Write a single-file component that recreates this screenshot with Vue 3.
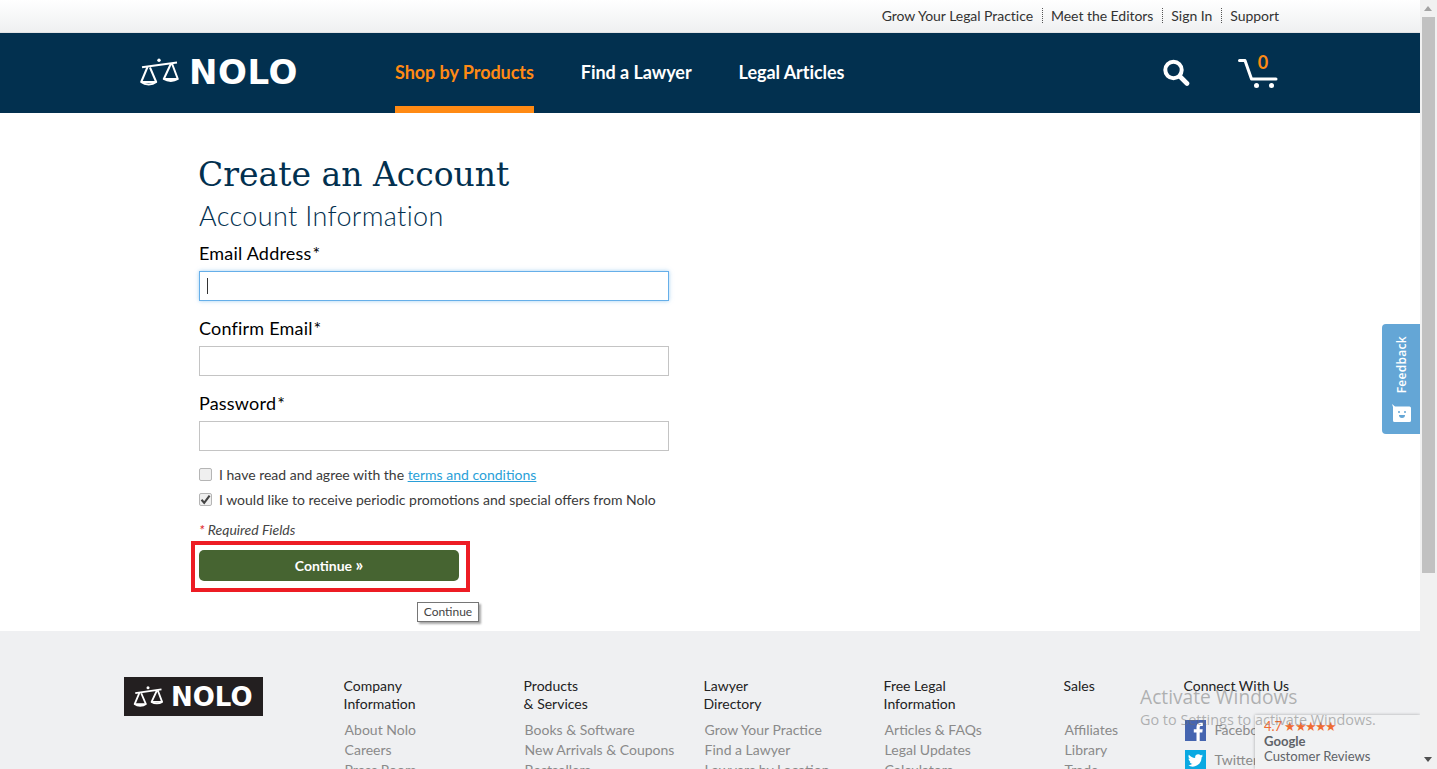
<script setup>
const topLinks = ['Grow Your Legal Practice', 'Meet the Editors', 'Sign In', 'Support']
const navLinks = [
  { label: 'Shop by Products', active: true },
  { label: 'Find a Lawyer', active: false },
  { label: 'Legal Articles', active: false }
]
const fields = [
  { label: 'Email Address', focus: true },
  { label: 'Confirm Email', focus: false },
  { label: 'Password', focus: false }
]
const columns = [
  { title: ['Company', 'Information'], links: ['About Nolo', 'Careers', 'Press Room'] },
  { title: ['Products', '& Services'], links: ['Books & Software', 'New Arrivals & Coupons', 'Bestsellers'] },
  { title: ['Lawyer', 'Directory'], links: ['Grow Your Practice', 'Find a Lawyer', 'Lawyers by Location'] },
  { title: ['Free Legal', 'Information'], links: ['Articles & FAQs', 'Legal Updates', 'Calculators'] },
  { title: ['Sales'], links: ['Affiliates', 'Library', 'Trade'] }
]
</script>

<template>
  <div class="screen">
    <div class="page">
      <div class="topbar">
        <template v-for="(l, i) in topLinks" :key="l">
          <span v-if="i" class="sep"></span>
          <a class="toplink">{{ l }}</a>
        </template>
      </div>

      <header class="nav">
        <div class="brand">
          <svg class="scales" width="40" height="29" viewBox="0 0 40 29" fill="none" stroke="#fff">
            <path d="M3 9.200 38 4.400" stroke-width="2" />
            <circle cx="20" cy="2.200" r="1.700" fill="#fff" stroke="none" />
            <path d="M8.500 9 2.200 24c4 3.200 11 3.200 15 0L11 9.500" stroke-width="2" stroke-linejoin="round" />
            <path d="M2.200 24h15" stroke-width="2" />
            <path d="M32 5.500 24.800 21c4 2.600 10 2.600 14 0L33 5.500" stroke-width="2" stroke-linejoin="round" />
            <path d="M24.800 21h14" stroke-width="2" />
          </svg>
          <span class="wordmark">NOLO</span>
        </div>
        <nav class="navlinks">
          <a v-for="n in navLinks" :key="n.label" class="navlink" :class="{ active: n.active }">{{ n.label }}</a>
        </nav>
        <div class="tools">
          <svg class="search" width="28" height="28" viewBox="0 0 28 28" fill="none" stroke="#fff">
            <circle cx="11.500" cy="11" r="8.200" stroke-width="4" />
            <path d="M18 17.500 25 24.500" stroke-width="4.600" stroke-linecap="round" />
          </svg>
          <div class="cart">
            <svg width="42" height="34" viewBox="0 0 42 34" fill="none" stroke="#fff">
              <path d="M3.500 5.500H9L15.500 24H40" stroke-width="3" stroke-linecap="round" stroke-linejoin="round" />
              <circle cx="20.500" cy="30.500" r="2.500" fill="#fff" stroke="none" />
              <circle cx="35.500" cy="30.500" r="2.500" fill="#fff" stroke="none" />
            </svg>
            <span class="count">0</span>
          </div>
        </div>
      </header>

      <main class="content">
        <h1>Create an Account</h1>
        <h2>Account Information</h2>
        <div v-for="f in fields" :key="f.label" class="field">
          <label>{{ f.label }}<span class="ast">*</span></label>
          <div class="input" :class="{ focus: f.focus }"><i v-if="f.focus" class="caret"></i></div>
        </div>
        <div class="check first">
          <span class="box"></span>
          <span>I have read and agree with the <a class="link">terms and conditions</a></span>
        </div>
        <div class="check second">
          <span class="box">
            <svg width="13" height="13" viewBox="0 0 13 13" fill="none" stroke="#444">
              <path d="M2.500 6.800 5.200 9.800 10.600 2.600" stroke-width="2.100" />
            </svg>
          </span>
          <span>I would like to receive periodic promotions and special offers from Nolo</span>
        </div>
        <p class="required"><span class="red">*</span> Required Fields</p>
        <button class="continue">Continue <span class="raquo">»</span></button>
      </main>

      <footer class="footer">
        <div class="footlogo">
          <svg width="30" height="22" viewBox="0 0 40 29" fill="none" stroke="#fff">
            <path d="M3 9.200 38 4.400" stroke-width="2.400" />
            <circle cx="20" cy="2.200" r="2" fill="#fff" stroke="none" />
            <path d="M8.500 9 2.200 24c4 3.200 11 3.200 15 0L11 9.500" stroke-width="2.400" stroke-linejoin="round" />
            <path d="M2.200 24h15" stroke-width="2.400" />
            <path d="M32 5.500 24.800 21c4 2.600 10 2.600 14 0L33 5.500" stroke-width="2.400" stroke-linejoin="round" />
            <path d="M24.800 21h14" stroke-width="2.400" />
          </svg>
          <span class="footword">NOLO</span>
        </div>
        <div class="cols">
          <div v-for="c in columns" :key="c.title[0]" class="col">
            <h4><span v-for="t in c.title" :key="t">{{ t }}</span></h4>
            <a v-for="l in c.links" :key="l" class="foot-link">{{ l }}</a>
          </div>
          <div class="col connect">
            <h4><span>Connect With Us</span></h4>
            <a class="foot-link social">
              <svg width="21" height="21" viewBox="0 0 21 21">
                <rect width="21" height="21" fill="#4565b0" />
                <path d="M11.500 21v-8.600h-2.700V9.200h2.700V7c0-2.700 1.600-4.200 4-4.200h2.300V6h-1.600c-1.200 0-1.500.6-1.500 1.500v1.700h3l-.4 3.200h-2.600V21z" fill="#fff" />
              </svg>
              Facebook
            </a>
            <a class="foot-link social">
              <svg width="21" height="21" viewBox="0 0 21 21">
                <rect width="21" height="21" fill="#0aa9e2" />
                <path d="M18 5.600c-.6.3-1.200.4-1.800.5.6-.4 1.100-1 1.300-1.700-.6.4-1.300.6-2 .8a3.100 3.100 0 0 0-5.300 2.800C7.700 7.900 5.400 6.700 3.900 4.800c-.8 1.400-.4 3.200 1 4.100-.5 0-1-.2-1.400-.4 0 1.500 1.100 2.800 2.500 3.100-.5.100-.9.100-1.400.100.4 1.200 1.500 2.100 2.900 2.100A6.300 6.300 0 0 1 3 15.100a8.800 8.800 0 0 0 13.600-7.800c.6-.4 1-1 1.400-1.700z" fill="#fff" />
              </svg>
              Twitter
            </a>
          </div>
        </div>
      </footer>

      <div class="tooltip">Continue</div>

      <div class="feedback">
        <span class="fb-text">Feedback</span>
        <svg width="20" height="18" viewBox="0 0 20 18">
          <path d="M1 0 4 2.500H18.500A1.500 1.500 0 0 1 20 4V16.500A1.500 1.500 0 0 1 18.500 18H3.500A1.500 1.500 0 0 1 2 16.500V3Z" fill="#fff" />
          <circle cx="8" cy="8" r="1" fill="#64a6d6" />
          <circle cx="14" cy="8" r="1" fill="#64a6d6" />
          <path d="M8 11h6a3 3 0 0 1-6 0z" fill="#64a6d6" />
        </svg>
      </div>

      <div class="badge">
        <div class="rating">4.7 <span class="stars">★★★★★</span></div>
        <div class="g">Google</div>
        <div class="cr">Customer Reviews</div>
      </div>

      <div class="activate">
        <div class="a1">Activate Windows</div>
        <div class="a2">Go to Settings to activate Windows.</div>
      </div>
    </div>

    <div class="scrollbar">
      <i class="arrow up"></i>
      <div class="thumb"></div>
      <i class="arrow down"></i>
    </div>
  </div>
</template>

<style scoped>
.screen {
  display: flex;
  width: 1437px;
  height: 769px;
  overflow: hidden;
  font-family: "Lato", "Liberation Sans", sans-serif;
}
.page {
  position: relative;
  width: 1420px;
  flex: none;
  height: 769px;
  overflow: hidden;
  background: #fff;
}
.topbar {
  height: 33px;
  box-sizing: border-box;
  display: flex;
  align-items: center;
  justify-content: flex-end;
  padding: 0 141px 2px 0;
  background: linear-gradient(#fff, #eff0f1);
  border-bottom: 1px solid #e2e3e5;
}
.toplink {
  font-size: 14px;
  letter-spacing: -0.04px;
  color: #333;
}
.sep {
  height: 15px;
  border-left: 1px dotted #555;
  margin: 0 8.5px;
}
.nav {
  height: 80px;
  background: #02304f;
  display: flex;
  align-items: stretch;
  padding: 0 142px 0 139px;
}
.brand {
  width: 256px;
  flex: none;
  display: flex;
  align-items: center;
  gap: 10px;
  padding-bottom: 2px;
  box-sizing: border-box;
}
.wordmark {
  font-family: "DejaVu Sans", sans-serif;
  font-weight: 700;
  font-size: 34px;
  letter-spacing: 0.6px;
  color: #fff;
  line-height: 1;
}
.navlinks {
  display: flex;
  gap: 47px;
  flex: 1;
}
.navlink {
  font-size: 18px;
  font-weight: 700;
  letter-spacing: -0.05px;
  color: #fff;
  display: flex;
  align-items: center;
  padding-bottom: 1px;
  box-sizing: border-box;
  border-bottom: 7px solid transparent;
  padding-top: 6px;
}
.navlink.active {
  color: #ff8a14;
  border-bottom-color: #ff8a14;
}
.tools {
  display: flex;
  align-items: center;
  gap: 46px;
}
.cart {
  position: relative;
  display: flex;
  margin-top: -3px;
}
.count {
  position: absolute;
  left: 21px;
  top: -4px;
  width: 12px;
  text-align: center;
  font-size: 18px;
  font-weight: 700;
  color: #ff8a14;
}
.content {
  height: 518px;
  box-sizing: border-box;
  padding: 41px 0 0 199px;
}
h1 {
  margin: 0 0 0 -1px;
  font-family: "DejaVu Serif", serif;
  font-weight: 400;
  font-size: 33px;
  line-height: 41px;
  color: #02304f;
}
h2 {
  margin: 4px 0 6px;
  font-weight: 300;
  font-size: 27px;
  letter-spacing: 0.35px;
  line-height: 34px;
  color: #02304f;
}
.field { width: 470px; height: 75px; }
.field label {
  display: block;
  height: 32px;
  font-size: 18px;
  letter-spacing: 0.2px;
  line-height: 29px;
  color: #000;
}
.ast { margin-left: 1px; }
.input {
  height: 30px;
  box-sizing: border-box;
  border: 1px solid #c4c4c4;
  display: flex;
  align-items: center;
  padding-left: 7px;
}
.input.focus {
  border-color: #66afe9;
  box-shadow: 0 0 4px rgba(102, 175, 233, 0.6);
}
.caret {
  width: 1px;
  height: 16px;
  background: #333;
}
.check {
  display: flex;
  align-items: center;
  gap: 7px;
  font-size: 14px;
  line-height: 25px;
  color: #3a3a3a;
}
.check.first { margin-top: -2px; }
.box {
  width: 13px;
  height: 13px;
  flex: none;
  box-sizing: border-box;
  border: 1px solid #b5b5b5;
  border-radius: 2px;
  background: #efefef;
  display: flex;
  align-items: center;
  justify-content: center;
}
.box svg { flex: none; }
.link {
  color: #2a9fd8;
  text-decoration: underline;
}
.required {
  margin: 8px 0 0;
  font-size: 14px;
  line-height: 20px;
  font-style: italic;
  color: #444;
}
.red { color: #e01b22; }
.continue {
  position: relative;
  display: block;
  width: 260px;
  height: 31px;
  margin-top: 10px;
  padding: 0;
  border: 0;
  border-radius: 5px;
  background: #466431;
  color: #fff;
  font-family: inherit;
  font-size: 14px;
  font-weight: 700;
}
.raquo { font-size: 17px; line-height: 14px; }
.continue::after {
  content: "";
  position: absolute;
  inset: -9px -11px -11px -8px;
  border: 4px solid #ed1c24;
}
.tooltip {
  position: absolute;
  left: 417px;
  top: 602px;
  width: 62px;
  height: 20px;
  box-sizing: border-box;
  border: 1px solid #767676;
  background: #fff;
  box-shadow: 2px 2px 2px rgba(0, 0, 0, 0.35);
  font-size: 12px;
  line-height: 18px;
  text-align: center;
  color: #444;
}
.footer {
  height: 138px;
  background: #eff0f2;
  display: flex;
  padding: 46px 0 0 124px;
  box-sizing: border-box;
}
.footlogo {
  width: 139px;
  height: 39px;
  box-sizing: border-box;
  padding-left: 9px;
  background: #231f20;
  flex: none;
  display: flex;
  align-items: center;
  gap: 8px;
}
.footword {
  font-family: "DejaVu Sans", sans-serif;
  font-weight: 700;
  font-size: 26px;
  color: #fff;
  line-height: 1;
}
.cols {
  margin-left: 80.6px;
  display: flex;
}
.col {
  width: 180px;
  flex: none;
  display: flex;
  flex-direction: column;
}
.col:nth-child(5) { width: 120px; }
h4 {
  margin: 0 0 7px;
  height: 36px;
  flex: none;
  display: flex;
  flex-direction: column;
  font-weight: 400;
  font-size: 14px;
  line-height: 18px;
  color: #222;
  white-space: nowrap;
}
.foot-link {
  flex: none;
  font-size: 14px;
  line-height: 20px;
  color: #8a8a8a;
  margin-left: 1px;
  white-space: nowrap;
}
.social {
  display: flex;
  align-items: center;
  gap: 9px;
  height: 30px;
  margin-top: -5px;
  margin-bottom: 5px;
}
.feedback {
  position: absolute;
  right: 0;
  top: 324px;
  width: 38px;
  height: 110px;
  box-sizing: border-box;
  border-radius: 4px 0 0 4px;
  background: #64a6d6;
  display: flex;
  flex-direction: column;
  align-items: center;
  padding-top: 12px;
  gap: 11px;
}
.fb-text {
  writing-mode: vertical-rl;
  transform: rotate(180deg);
  font-family: "Open Sans", sans-serif;
  font-size: 12px;
  font-weight: 600;
  letter-spacing: 0.3px;
  color: #fff;
}
.badge {
  position: absolute;
  left: 1255px;
  top: 715px;
  width: 165px;
  height: 54px;
  box-sizing: border-box;
  padding: 4px 0 0 9px;
  background: #f1f2f3;
  box-shadow: 0 0 3px rgba(0, 0, 0, 0.3);
  font-size: 13.1px;
  line-height: 15px;
  color: #5f6368;
}
.rating {
  font-size: 13px;
  line-height: 15px;
  color: #ef6c32;
}
.stars { font-size: 13px; letter-spacing: -1.8px; margin-left: -1px; }
.g { font-weight: 700; line-height: 15px; }
.cr { line-height: 15px; }
.activate {
  position: absolute;
  left: 1140px;
  top: 684px;
  font-family: "Open Sans", sans-serif;
  color: rgba(110, 110, 110, 0.5);
  white-space: nowrap;
  pointer-events: none;
}
.a1 { font-size: 19.2px; line-height: 26px; }
.a2 { font-size: 14.4px; line-height: 19px; }
.scrollbar {
  position: relative;
  width: 17px;
  flex: none;
  height: 769px;
  background: #f1f1f1;
  box-sizing: border-box;
  padding: 17px 2px 0;
}
.thumb {
  height: 556px;
  background: #c1c1c1;
}
.arrow.up {
  position: absolute;
  left: 4px;
  top: 6px;
  border: 4px solid transparent;
  border-bottom: 5px solid #a3a3a3;
  border-top: 0;
}
.arrow.down {
  position: absolute;
  left: 4px;
  bottom: 7px;
  border: 4px solid transparent;
  border-top: 5px solid #505050;
  border-bottom: 0;
}
</style>
